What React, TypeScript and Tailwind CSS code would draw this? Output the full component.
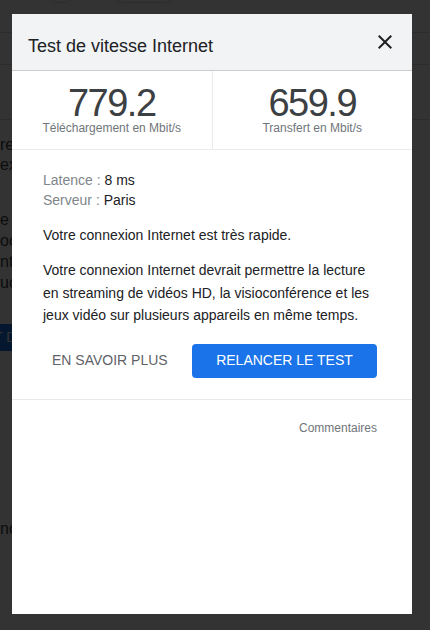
import React from "react";

function CloseIcon() {
  return (
    <svg width="24" height="24" viewBox="0 0 24 24" aria-hidden="true">
      <path
        fill="#202124"
        d="M19 6.41L17.59 5 12 10.59 6.41 5 5 6.41 10.59 12 5 17.59 6.41 19 12 13.41 17.59 19 19 17.59 13.41 12z"
      />
    </svg>
  );
}

function Stat({ value, label, divider }: { value: string; label: string; divider?: boolean }) {
  return (
    <div
      className={
        "flex-1 flex flex-col items-center pt-[13px] pb-[15px] " +
        (divider ? "border-r border-[#e8eaed]" : "")
      }
    >
      <div className="text-[38px] leading-[38px] tracking-[-1.5px] text-[#3c4043]">{value}</div>
      <div className="text-[12px] leading-[12px] text-[#70757a]">{label}</div>
    </div>
  );
}

export default function App() {
  return (
    <div className="relative w-[430px] h-[630px] overflow-hidden bg-white font-['Liberation_Sans',Arial,sans-serif]">
      {/* background page (dimmed) */}
      <div className="flex flex-col text-[16px] text-[#3c4043]">
        <div className="flex gap-[30px] mt-[-27px] h-[30px] pl-[43px]">
          <div className="w-[35px] h-[30px] rounded-full border border-[#dadce0]" />
          <div className="w-[72px] h-[30px] rounded-full border border-[#dadce0]" />
        </div>
        <div className="h-[30px] border-b border-[#dadce0]" />
        <div className="h-[32px] border-b border-[#dadce0]" />
        <div className="h-[55px] border-b border-[#dadce0]" />
        <div className="pt-[15px] leading-[20px]">
          <div>rencontrer</div>
          <div>exemple</div>
        </div>
        <div className="mt-[34px] leading-[21px]">
          <div>e</div>
          <div>océan</div>
          <div>nterne</div>
          <div>ucune</div>
        </div>
        <div className="mt-[31px] h-[27px] w-[120px] ml-[-20px] bg-[#1a73e8] text-white text-[14px] flex items-center pl-[14px]">
          T D
        </div>
        <div className="mt-[168px] leading-[20px]">no</div>
      </div>

      {/* overlay */}
      <div className="absolute inset-0 bg-black/80" />

      {/* dialog */}
      <div className="absolute left-[12px] top-[14px] w-[400px] h-[600px] bg-white flex flex-col">
        <div className="h-[57px] bg-[#f1f3f4] border-b border-[#cccccc] flex items-center justify-between pl-[16px] pr-[15px]">
          <div className="mt-[8px] text-[18px] leading-[24px] text-[#202124]">Test de vitesse Internet</div>
          <CloseIcon />
        </div>

        <div className="flex border-b border-[#ebebeb]">
          <Stat value="779.2" label="Téléchargement en Mbit/s" divider />
          <Stat value="659.9" label="Transfert en Mbit/s" />
        </div>

        <div className="pl-[31px] pr-[35px] pt-[20px] text-[14px] text-[#202124]">
          <div className="leading-[20px]">
            <div>
              <span className="text-[#80868b]">Latence : </span>8 ms
            </div>
            <div>
              <span className="text-[#80868b]">Serveur : </span>Paris
            </div>
          </div>
          <p className="mt-[14px] leading-[22.4px]">Votre connexion Internet est très rapide.</p>
          <p className="mt-[13px] leading-[22.4px]">
            Votre connexion Internet devrait permettre la lecture en streaming de vidéos HD, la
            visioconférence et les jeux vidéo sur plusieurs appareils en même temps.
          </p>
          <div className="mt-[17px] flex items-center">
            <button className="h-[34px] px-[9px] text-[14px] text-[#5f6368] uppercase">
              En savoir plus
            </button>
            <button className="ml-auto w-[185px] h-[34px] rounded-[4px] bg-[#1a73e8] text-white text-[14px]">
              RELANCER LE TEST
            </button>
          </div>
        </div>

        <div className="mt-[21px] border-t border-[#e8eaed] pt-[20px] pr-[35px] flex justify-end">
          <span className="text-[12px] leading-[16px] text-[#70757a]">Commentaires</span>
        </div>
      </div>
    </div>
  );
}
